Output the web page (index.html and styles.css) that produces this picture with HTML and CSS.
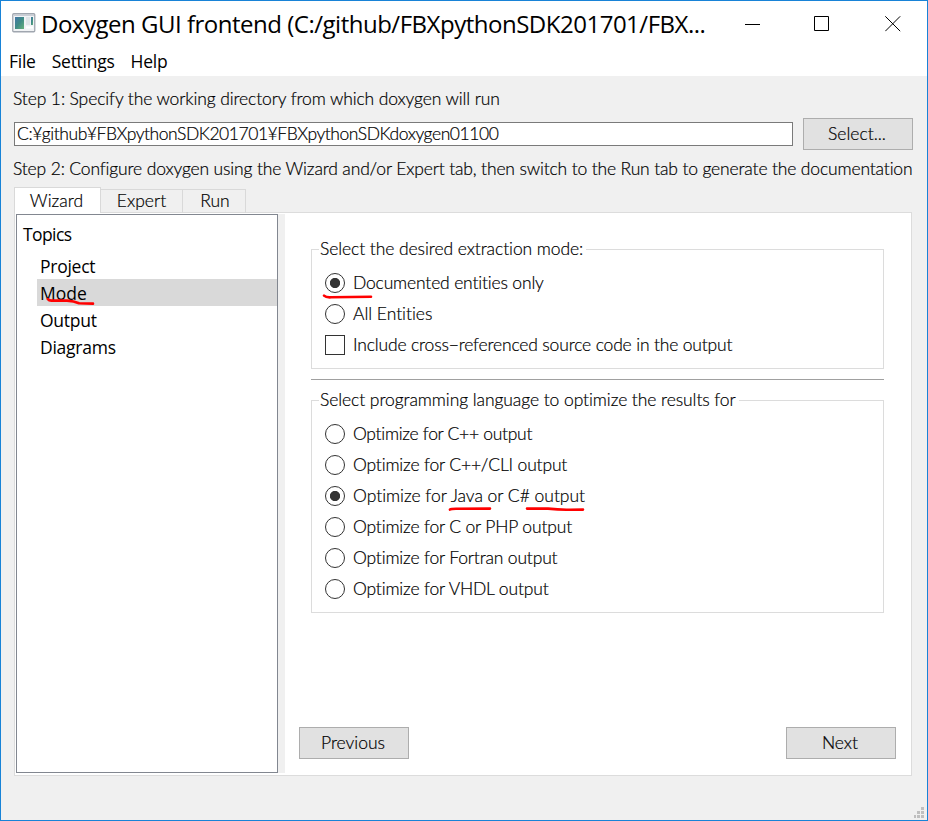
FILE: index.html
```
<!DOCTYPE html>
<html lang="en">
<head>
<meta charset="utf-8">
<title>Doxygen GUI frontend</title>
<link rel="stylesheet" href="styles.css">
</head>
<body>
<div class="window">
  <header class="titlebar">
    <svg class="app-icon" width="24" height="20" viewBox="0 0 24 20">
      <defs>
        <linearGradient id="scr" x1="0" y1="0" x2="1" y2="1"><stop offset="0" stop-color="#4377a8"/><stop offset=".5" stop-color="#3f8b86"/><stop offset="1" stop-color="#68b27c"/></linearGradient>
      </defs>
      <rect x=".75" y=".75" width="22" height="18" rx="1" fill="#f1f3f5" stroke="#a0a6af" stroke-width="1.3"/>
      <path d="M2 2.5h20" stroke="#c9ced6"/>
      <rect x="3" y="4" width="9" height="12" fill="url(#scr)"/>
      <rect x="14" y="4" width="4" height="8" fill="#dfe5e8"/>
      <rect x="19" y="4" width="2" height="8" fill="url(#scr)"/>
      <path d="M14 14.5h7" stroke="#fff" stroke-width="2"/>
    </svg>
    <h1 class="title">Doxygen GUI frontend (C:/github/FBXpythonSDK201701/FBX...</h1>
    <div class="controls">
      <svg width="16" height="16" viewBox="0 0 16 16"><path d="M0 8.5h15"/></svg>
      <svg width="16" height="16" viewBox="0 0 16 16"><path d="M.5 .5h14v14h-14z"/></svg>
      <svg width="16" height="16" viewBox="0 0 16 16"><path d="M.3 .3l14.9 14.9M15.2 .3L.3 15.2"/></svg>
    </div>
  </header>
  <nav class="menubar"><span>File</span><span>Settings</span><span>Help</span></nav>
  <main class="content">
    <p class="step step-1">Step 1: Specify the working directory from which doxygen will run</p>
    <div class="dir-row">
      <div class="input">C:¥github¥FBXpythonSDK201701¥FBXpythonSDKdoxygen01100</div>
      <button class="button">Select...</button>
    </div>
    <p class="step step-2">Step 2: Configure doxygen using the Wizard and/or Expert tab, then switch to the Run tab to generate the documentation</p>
    <div class="tabs">
      <div class="tab active">Wizard</div>
      <div class="tab expert">Expert</div>
      <div class="tab run">Run</div>
    </div>
    <section class="pane">
      <aside class="topics">
        <div class="topics-head">Topics</div>
        <ul>
          <li>Project</li>
          <li class="selected">Mode
            <svg class="mark mark-mode" width="50" height="10" viewBox="0 0 50 10"><path d="M2 3.2Q3 4.8 6 4.6L21 4.6Q28 5 33 7.2L47 7.6"/></svg>
          </li>
          <li>Output</li>
          <li>Diagrams</li>
        </ul>
      </aside>
      <div class="splitter"></div>
      <div class="page">
        <div class="group">
          <div class="legend">Select the desired extraction mode:</div>
          <div class="option"><i class="radio on"></i><span>Documented entities only</span>
            <svg class="mark mark-doc" width="52" height="8" viewBox="0 0 52 8"><path d="M2 2.6Q4 4.6 9 4.3L49 3.8"/></svg>
          </div>
          <div class="option"><i class="radio"></i><span class="loose">All Entities</span></div>
          <div class="option"><i class="check"></i><span>Include cross−referenced source code in the output</span></div>
        </div>
        <div class="rule"></div>
        <div class="group languages">
          <div class="legend">Select programming language to optimize the results for</div>
          <div class="option"><i class="radio"></i><span class="tight">Optimize for C++ output</span></div>
          <div class="option"><i class="radio"></i><span>Optimize for C++/CLI output</span></div>
          <div class="option"><i class="radio on"></i><span class="loose">Optimize for Java or C# output</span>
            <svg class="mark mark-java" width="140" height="8" viewBox="0 0 140 8"><path d="M2 4.6Q3 3.8 8 3.8L42 3.6M79 3.6L100 3.6Q112 5 122 4.7L135 4.6"/></svg>
          </div>
          <div class="option"><i class="radio"></i><span>Optimize for C or PHP output</span></div>
          <div class="option"><i class="radio"></i><span>Optimize for Fortran output</span></div>
          <div class="option"><i class="radio"></i><span>Optimize for VHDL output</span></div>
        </div>
        <div class="actions">
          <button class="button">Previous</button>
          <button class="button">Next</button>
        </div>
      </div>
    </section>
  </main>
  <svg class="grip" width="11" height="12" viewBox="0 0 11 12" shape-rendering="crispEdges"><path d="M7 0h3v3h-3zM3 4h3v3h-3zM7 4h3v3h-3zM0 8h2v3h-2zM3 8h3v3h-3zM7 8h3v3h-3z" fill="#bfbfbf"/></svg>
</div>
</body>
</html>
```
FILE: styles.css
```
* { box-sizing: border-box; }
body {
  margin: 0;
  color: #000;
  font: 300 17.5px/20px Lato, "Noto Sans CJK JP", sans-serif;
  font-variant-ligatures: none;
  white-space: nowrap;
}
.window {
  position: relative;
  width: 928px;
  height: 821px;
  border: 1px solid #1883d7;
  background: #f0f0f0;
  overflow: hidden;
}
.titlebar {
  display: flex;
  height: 46px;
  padding-left: 11px;
  background: #fff;
}
.app-icon { margin-top: 12px; flex: none; }
.title {
  margin: 0 0 0 5px;
  width: 666px;
  font: 400 24px/46px "Open Sans", "Noto Sans", sans-serif;
  letter-spacing: -0.49px;
}
.controls {
  display: flex;
  gap: 54px;
  margin: 15px 0 0 38px;
  fill: none;
  stroke: #000;
  stroke-width: 1;
}
.controls svg:nth-child(2) { margin-left: -1px; }
.controls svg:nth-child(3) { margin-left: 1px; }
.menubar {
  display: flex;
  gap: 16px;
  height: 29px;
  padding-left: 8px;
  background: #fff;
  font: 400 17.5px/29px "Open Sans", "Noto Sans", sans-serif;
  letter-spacing: -0.25px;
}
.content {
  padding: 13px 14px 0 13px;
  -webkit-text-stroke: 0.2px #000;
}
.step { margin: 0; height: 20px; margin-left: -1px; }
.step-1 { letter-spacing: -0.12px; }
.step-2 { letter-spacing: -0.155px; margin-top: 9px; }
.dir-row {
  display: flex;
  align-items: center;
  gap: 10px;
  margin-top: 9px;
}
.input {
  flex: 1;
  height: 24px;
  padding-left: 2px;
  border: 1px solid #7a7a7a;
  background: #fff;
  line-height: 22px;
  letter-spacing: -0.45px;
}
.button {
  width: 110px;
  height: 32px;
  padding: 0 2px 0 0;
  border: 1px solid #adadad;
  border-radius: 0;
  background: #e1e1e1;
  color: #000;
  font: inherit;
  -webkit-text-stroke: inherit;
}
.tabs {
  display: flex;
  align-items: flex-end;
  height: 26px;
  margin-top: 8px;
}
.tab {
  height: 24px;
  border: 1px solid #d9d9d9;
  border-left: 0;
  border-bottom: 0;
  line-height: 22px;
  text-align: center;
}
.tab.active {
  position: relative;
  width: 87px;
  height: 26px;
  padding-right: 2px;
  border-left: 1px solid #d9d9d9;
  background: #fff;
  line-height: 25px;
}
.expert { width: 82px; }
.run { width: 63px; padding-left: 2px; }
.pane {
  display: flex;
  width: 898px;
  height: 564px;
  margin-top: -1px;
  padding: 2px 1px;
  border: 1px solid #dcdcdc;
  background: #fff;
}
.topics {
  width: 262px;
  height: 559px;
  margin-top: -1px;
  border: 1px solid #828790;
  font: 400 17.5px/27px "Open Sans", "Noto Sans", sans-serif;
  letter-spacing: -0.25px;
  -webkit-text-stroke: 0;
}
.topics-head { padding: 6px 0 0 6px; height: 37px; letter-spacing: -0.6px; }
.topics ul { list-style: none; margin: 0 0 0 20px; padding: 0; }
.topics li { position: relative; height: 27px; padding-left: 3px; line-height: 29px; }
.topics .selected { background: #d9d9d9; letter-spacing: 0; }
.splitter { width: 7px; height: 559px; margin-top: -1px; background: #f0f0f0; }
.page {
  flex: 1;
  display: flex;
  flex-direction: column;
  padding: 34px 14px 14px;
}
.group {
  width: 573px;
  height: 120px;
  margin-left: 12px;
  padding-left: 13px;
  border: 1px solid #dcdcdc;
}
.legend {
  width: max-content;
  height: 20px;
  margin: -11px 0 8px -6px;
  padding: 0 3px 0 1px;
  background: #fff;
  letter-spacing: -0.08px;
}
.rule { width: 573px; height: 1px; margin: 10px 0 21px 12px; background: #a0a0a0; }
.languages { height: 213px; margin-top: -1px; }
.option {
  position: relative;
  display: flex;
  align-items: center;
  gap: 8px;
  height: 31px;
  letter-spacing: -0.17px;
}
.loose { letter-spacing: -0.02px; }
.tight { letter-spacing: -0.3px; }
.radio, .check {
  width: 20px;
  height: 20px;
  border: 1.4px solid #333;
  background: #fff;
}
.radio { border-radius: 50%; }
.radio.on { background: radial-gradient(circle, #333 4.7px, #fff 5.5px); }
.actions {
  display: flex;
  justify-content: space-between;
  margin-top: auto;
}
.mark {
  position: absolute;
  fill: none;
  stroke: #ff0000;
  stroke-width: 2.6;
  stroke-linecap: round;
}
.mark-mode { left: 9px; top: 17px; }
.mark-doc { left: -3px; top: 26px; }
.mark-java { left: 123px; top: 25px; }
.grip { position: absolute; right: 2px; bottom: 1px; }
```
